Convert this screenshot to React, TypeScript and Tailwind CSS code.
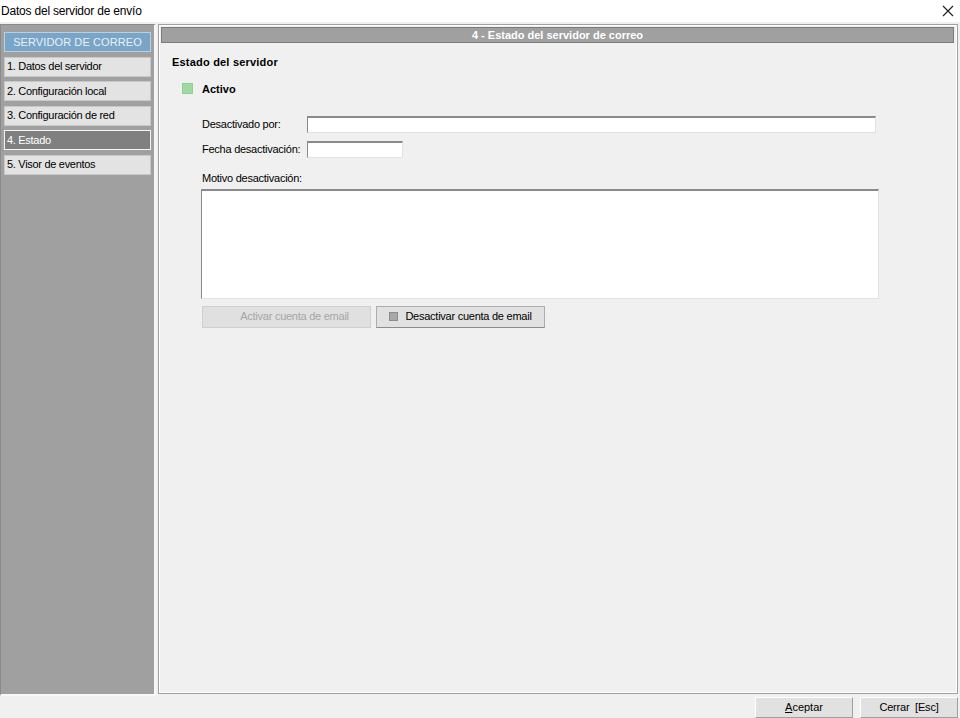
import React from "react";

const font = { fontFamily: '"Liberation Sans", Arial, sans-serif' };

function NavItem({ label, active }: { label: string; active?: boolean }) {
  return (
    <div
      className={
        active
          ? "h-[20px] flex items-center pl-[2px] text-[11px] tracking-[-0.3px] text-white bg-[#808080] border border-[#f4f4f4]"
          : "h-[20px] flex items-center pl-[2px] text-[11px] tracking-[-0.3px] text-black bg-[#e3e3e3] border border-[#c8c8c8]"
      }
    >
      {label}
    </div>
  );
}

export default function App() {
  return (
    <div className="w-[960px] h-[718px] bg-[#f0f0f0] flex flex-col overflow-hidden" style={font}>
      {/* Title bar */}
      <div className="h-[22px] bg-white flex items-center justify-between shrink-0">
        <span className="pl-[1px] text-[12px] tracking-[-0.2px] text-black">Datos del servidor de envío</span>
        <svg width="12" height="12" viewBox="0 0 12 12" className="mr-[6px]">
          <path d="M1 1 L11 11 M11 1 L1 11" stroke="#222" strokeWidth="1.2" />
        </svg>
      </div>

      {/* Middle */}
      <div className="flex-1 flex pt-[2px] min-h-0">
        {/* Sidebar */}
        <div className="w-[156px] h-[672px] bg-[#a0a0a0] border-l border-t border-[#8a8a8a] border-r-2 border-r-[#f8f8f8] border-b-2 border-b-[#f8f8f8] pt-[7px] px-[3px] flex flex-col gap-[4.5px] shrink-0">
          <div className="h-[20px] flex items-center justify-center bg-[#79a5c9] border border-[#b9d0e2] text-[11px] tracking-[0.1px] text-[#e8f1f8]">
            SERVIDOR DE CORREO
          </div>
          <NavItem label="1. Datos del servidor" />
          <NavItem label="2. Configuración local" />
          <NavItem label="3. Configuración de red" />
          <NavItem label="4. Estado" active />
          <NavItem label="5. Visor de eventos" />
        </div>

        {/* Main panel */}
        <div className="ml-[2px] w-[800px] h-[670px] border border-[#a0a0a0] flex flex-col">
          <div className="flex-1 border border-white flex flex-col pt-[1px] pr-[1px]">
            <div className="h-[16px] mx-[1px] bg-[#a0a0a0] border border-[#7c7c7c] flex items-center justify-center text-[11px] font-bold text-white">
              4 - Estado del servidor de correo
            </div>

            <div className="pl-[12px] pt-[11px] flex flex-col">
              <div className="text-[11px] font-bold text-black tracking-[0.2px]">Estado del servidor</div>

              <div className="flex items-center mt-[10px] ml-[10px]">
                <div className="w-[11px] h-[11px] bg-[#a2d9a2] border border-[#8fcf8f]" />
                <span className="ml-[9px] text-[11px] font-bold text-black">Activo</span>
              </div>

              <div className="ml-[30px] mt-[19px] flex flex-col">
                <div className="flex items-center h-[17px]">
                  <span className="w-[105px] text-[11px] tracking-[-0.25px] text-black">Desactivado por:</span>
                  <div className="w-[569px] h-[17px] bg-white border-t-2 border-l border-[#8a8a8a] border-r border-b border-r-[#e2e2e2] border-b-[#e2e2e2]" />
                </div>
                <div className="flex items-center h-[17px] mt-[8px]">
                  <span className="w-[105px] text-[11px] tracking-[-0.25px] text-black">Fecha desactivación:</span>
                  <div className="w-[96px] h-[17px] bg-white border-t-2 border-l border-[#8a8a8a] border-r border-b border-r-[#e2e2e2] border-b-[#e2e2e2]" />
                </div>
                <div className="text-[11px] tracking-[-0.25px] text-black mt-[12px]">Motivo desactivación:</div>
                <div className="mt-[2px] -ml-[1px] w-[678px] h-[110px] bg-white border-t-2 border-l border-[#8a8a8a] border-r border-b border-r-[#e2e2e2] border-b-[#e2e2e2]" />

                <div className="flex mt-[7px] gap-[5px]">
                  <div className="w-[169px] h-[22px] pl-[16px] bg-[#e0e0e0] border border-[#cfcfcf] flex items-center justify-center text-[11px] tracking-[-0.25px] text-[#a6a6a6]">
                    Activar cuenta de email
                  </div>
                  <div className="w-[169px] h-[22px] bg-[#e1e1e1] border border-[#adadad] border-b-[#8c8c8c] flex items-center justify-center text-[11px] tracking-[-0.25px] text-black">
                    <span className="w-[9px] h-[9px] bg-[#a8a8a8] border border-[#8c8c8c] mr-[7px]" />
                    Desactivar cuenta de email
                  </div>
                </div>
              </div>
            </div>
          </div>
        </div>
      </div>

      {/* Bottom bar */}
      <div className="h-[24px] flex items-end justify-end gap-[7px] pr-[2px] shrink-0">
        <div className="w-[98px] h-[21px] bg-[#e1e1e1] border-t border-l border-white border-r border-b border-r-[#a0a0a0] border-b-[#a0a0a0] flex items-center justify-center text-[11px] text-black">
          <span><span className="underline">A</span>ceptar</span>
        </div>
        <div className="w-[98px] h-[21px] bg-[#e1e1e1] border-t border-l border-white border-r border-b border-r-[#a0a0a0] border-b-[#a0a0a0] flex items-center justify-center text-[11px] tracking-[-0.2px] text-black">
          Cerrar&nbsp; [Esc]
        </div>
      </div>
    </div>
  );
}
